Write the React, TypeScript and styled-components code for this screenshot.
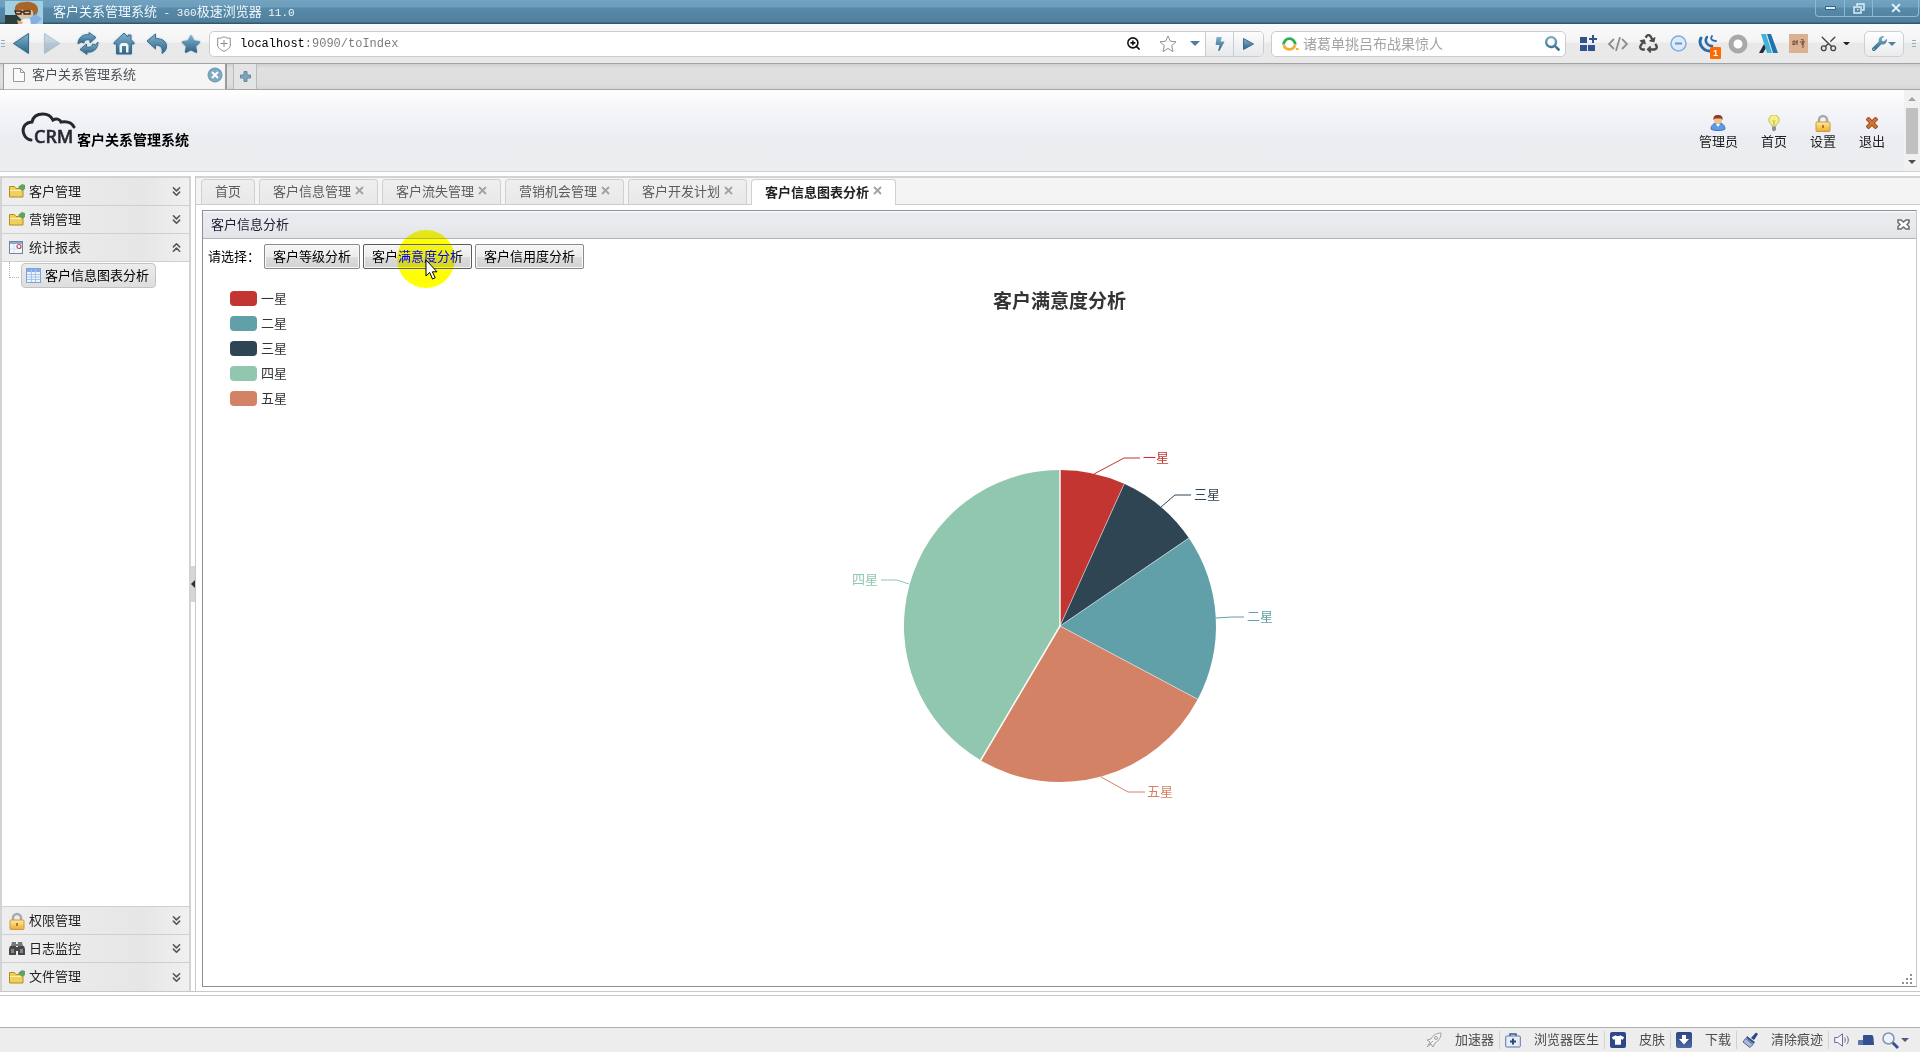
import React, { useState } from 'react';
import styled, { createGlobalStyle, css } from 'styled-components';
import { Scissors, ZoomIn, ChevronsDown, ChevronsUp } from 'lucide-react';
import {
  FaBolt,
  FaRecycle,
  FaSearch,
  FaStar,
  FaTshirt,
  FaWrench,
} from 'react-icons/fa';

const Global = createGlobalStyle`
  *, *::before, *::after { box-sizing: border-box; }
  body {
    margin: 0;
    background: #fff;
    color: #222;
    font: 13px/18px "Liberation Sans", "Noto Sans CJK SC", sans-serif;
  }
  button, input { font: inherit; color: inherit; margin: 0; }
  button { cursor: default; }
  svg { display: block; flex: none; }
  ul { list-style: none; margin: 0; padding: 0; }
`;

/* ---------- browser frame ---------- */

const Window = styled.div`
  display: flex;
  flex-direction: column;
  min-height: 100vh;
`;

const TitleBar = styled.header`
  display: flex;
  justify-content: space-between;
  height: 24px;
  padding: 0 1px 0 5px;
  background: linear-gradient(#72a3c0 0, #6b9dbc 7px, #588ba8 8px, #507f9c 22px, #2f5870 23px);
`;

const TitleText = styled.div`
  display: flex;
  align-items: center;
  gap: 10px;
  color: #eef7fc;
  white-space: pre;
`;

const Latin = styled.span`
  font: 11px/18px "Liberation Mono", monospace;
`;

const WindowButtons = styled.div`
  display: flex;
  height: 17px;
  border: 1px solid #8db9d2;
  border-top: 0;
  border-radius: 0 0 4px 4px;
`;

const WindowButton = styled.button<{ $wide?: boolean }>`
  display: grid;
  place-items: center;
  width: ${(p) => (p.$wide ? 46 : 28)}px;
  padding: 0;
  border: 0;
  border-left: 1px solid #8db9d2;
  background: none;
  &:first-child { border-left: 0; }
`;

const NavBar = styled.nav`
  display: flex;
  align-items: center;
  height: 40px;
  padding: 0 4px 0 1px;
  border-bottom: 1px solid #a2a2a2;
  background: linear-gradient(#fafafa 0, #f4f4f4 18px, #e9e9e9 19px, #e9e9e9 100%);
`;

const NavGroup = styled.div`
  display: flex;
  align-items: center;
`;

const NavButton = styled.button<{ $width: number; $dim?: boolean }>`
  display: grid;
  place-items: center;
  width: ${(p) => p.$width}px;
  height: 30px;
  padding: 0;
  border: 0;
  background: none;
  opacity: ${(p) => (p.$dim ? 0.35 : 1)};
  filter: drop-shadow(0 0 1px #b9d4e4);
`;

const blueFill = css`
  fill: url(#shade);
  stroke: #3c6c8a;
`;

const Shaded = styled.span`
  display: block;
  svg { ${blueFill} }
`;

const GripColumn = styled.span`
  width: 4px;
  height: 8px;
  background: repeating-linear-gradient(#8fb0c2 0 1px, transparent 1px 3px);
`;

const AddressBox = styled.div`
  display: flex;
  align-items: center;
  flex: 1;
  height: 26px;
  margin: 0 7px 0 2px;
  padding-left: 7px;
  border: 1px solid #c9cdd1;
  border-radius: 5px;
  background: #fff;
  overflow: hidden;
`;

const AddressInput = styled.input`
  flex: 1;
  min-width: 0;
  height: 18px;
  margin: 0 0 0 9px;
  padding: 0;
  border: 0;
  outline: 0;
  font: 12px/18px "Liberation Mono", monospace;
  color: transparent;
  background: linear-gradient(90deg, #000 0 65px, #777 65px);
  background-clip: text;
  -webkit-background-clip: text;
`;

const PlainButton = styled.button<{ $width: number }>`
  display: grid;
  place-items: center;
  width: ${(p) => p.$width}px;
  height: 24px;
  padding: 0;
  border: 0;
  background: none;
`;

const EndButton = styled(PlainButton)`
  border-left: 1px solid #c9cdd1;
  background: linear-gradient(#fdfdfd, #e6e8ea);
`;

const SearchBox = styled(AddressBox)`
  flex: none;
  width: 295px;
  margin: 0 7px 0 0;
  padding: 0 4px 0 10px;
`;

const SearchInput = styled.input`
  flex: 1;
  min-width: 0;
  height: 22px;
  margin-left: 4px;
  padding: 0;
  border: 0;
  outline: 0;
  font-size: 14px;
  background: none;
  &::placeholder { color: #a3a3a3; opacity: 1; }
`;

const Extension = styled(PlainButton)`
  position: relative;
  height: 30px;
`;

const Badge = styled.span`
  position: absolute;
  right: 2px;
  bottom: 0;
  width: 11px;
  height: 12px;
  border-radius: 1px;
  background: #ff6a00;
  color: #fff;
  font: bold 9px/12px "Liberation Sans", sans-serif;
`;

const ToolsButton = styled.button`
  display: flex;
  align-items: center;
  justify-content: center;
  gap: 1px;
  width: 40px;
  height: 26px;
  margin: 0 8px 0 14px;
  padding: 0;
  border: 1px solid #cdd0d3;
  border-radius: 5px;
  background: linear-gradient(#fff, #e9ebed);
`;

const TabStrip = styled.div`
  display: flex;
  height: 26px;
  padding-left: 3px;
  border-bottom: 1px solid #a6a6a6;
  background: linear-gradient(#cfcfcf 0, #e0e0e0 4px, #dedede 20px, #d5d5d5 100%);
`;

const PageTab = styled.div`
  display: flex;
  align-items: center;
  gap: 7px;
  width: 224px;
  margin-bottom: -1px;
  padding: 0 2px 3px 9px;
  border: solid #9a9a9a;
  border-width: 0 2px 0 1px;
  border-bottom: 1px solid #b5b5b5;
  background: #f5f5f5;
  color: #4a5258;
  span { flex: 1; }
`;

const NewTab = styled.button`
  display: grid;
  place-items: center;
  width: 24px;
  margin-left: 6px;
  padding: 0;
  border: solid #b9bcbe;
  border-width: 0 1px;
  background: #e4e4e4;
`;

/* ---------- application ---------- */

const Banner = styled.header`
  display: flex;
  justify-content: space-between;
  height: 82px;
  border-bottom: 1px solid #cfd0d3;
  background: linear-gradient(#fff 0, #f7f7fa 16px, #ebedf2 48px, #ecedee 100%);
`;

const Brand = styled.h1`
  display: flex;
  align-items: flex-end;
  align-self: flex-start;
  margin: 22px 0 0 22px;
  font-size: 14px;
  line-height: 16px;
  font-weight: bold;
  color: #000;
`;

const BannerRight = styled.div`
  display: flex;
`;

const Menu = styled.ul`
  display: flex;
  gap: 23px;
  padding: 24px 19px 0 0;
`;

const MenuLink = styled.a`
  display: flex;
  flex-direction: column;
  align-items: center;
  gap: 1px;
  color: #222;
  text-decoration: none;
`;

const IconSlot = styled.span`
  display: grid;
  place-items: center;
  height: 18px;
`;

const ScrollTrack = styled.div`
  display: flex;
  flex-direction: column;
  align-items: center;
  justify-content: space-between;
  width: 16px;
  padding: 7px 0;
  background: #f1f1f1;
`;

const ScrollThumb = styled.div`
  width: 12px;
  height: 46px;
  background: #c1c1c1;
`;

const Workspace = styled.div`
  display: flex;
  flex: 1;
  margin-top: 4px;
  border-bottom: 1px solid #c8c8c8;
`;

const Sidebar = styled.aside`
  display: flex;
  flex-direction: column;
  width: 191px;
  border: 2px solid #d3d3d3;
  border-bottom: 0;
`;

const SideHeader = styled.button`
  display: flex;
  align-items: center;
  gap: 4px;
  width: 100%;
  height: 28px;
  padding: 0 5px 0 7px;
  border: 0;
  border-bottom: 1px solid #cfcfcf;
  background: linear-gradient(90deg, #eeeeee, #e6e6e6 75%, #f0f0f0);
  text-align: left;
  span { flex: 1; }
`;

const SideBottom = styled.div`
  margin-top: auto;
  border-top: 1px solid #cfcfcf;
  > :last-child { border-bottom: 0; }
`;

const Tree = styled.div`
  display: flex;
  padding-left: 7px;
`;

const TreeLine = styled.span`
  width: 10px;
  height: 16px;
  border: dotted #b5b5b5;
  border-width: 0 0 1px 1px;
`;

const TreeItem = styled.button`
  display: flex;
  align-items: center;
  gap: 4px;
  height: 25px;
  margin: 1px 0 0 2px;
  padding: 0 6px 0 4px;
  border: 1px solid #c3c3c3;
  border-radius: 4px;
  background: linear-gradient(#ececec, #dedede);
  color: #000;
`;

const Splitter = styled.button`
  display: flex;
  align-items: center;
  width: 4px;
  padding: 0;
  border: 0;
  background: #fff;
`;

const SplitHandle = styled.span`
  display: grid;
  place-items: center;
  width: 4px;
  height: 36px;
  background: #d6d6d6;
`;

const Content = styled.main`
  display: flex;
  flex-direction: column;
  flex: 1;
  min-width: 0;
  border-left: 1px solid #c8c8c8;
  border-top: 2px solid #d3d3d3;
`;

const TabBar = styled.div`
  display: flex;
  gap: 4px;
  height: 27px;
  padding: 1px 5px 0;
  border-bottom: 1px solid #cccccc;
  background: #f4f4f4;
`;

const Tab = styled.div<{ $active: boolean }>`
  display: flex;
  align-items: center;
  gap: 4px;
  padding: 0 13px;
  border: 1px solid #d0d0d0;
  border-bottom: 0;
  border-radius: 4px 4px 0 0;
  margin-bottom: ${(p) => (p.$active ? -1 : 0)}px;
  background: ${(p) => (p.$active ? '#fff' : 'linear-gradient(#efefef, #e8e8e8)')};
  color: ${(p) => (p.$active ? '#222' : '#5c5c5c')};
  font-weight: ${(p) => (p.$active ? 'bold' : 'normal')};
`;

const TabLabel = styled.button`
  padding: 0;
  border: 0;
  background: none;
  font-weight: inherit;
`;

const TabClose = styled.button`
  padding: 0 0 4px;
  border: 0;
  background: none;
`;

const Panel = styled.section`
  display: flex;
  flex-direction: column;
  flex: 1;
  margin: 5px 3px 4px 6px;
  border: 1px solid #8e9096;
  border-right-color: #c9cacd;
`;

const PanelHeader = styled.div`
  display: flex;
  align-items: center;
  justify-content: space-between;
  height: 28px;
  padding: 0 6px 0 8px;
  border-bottom: 1px solid #b4b5b8;
  background: linear-gradient(#fff 0, #e9ebf0 2px, #e8eaee 14px, #e3e4e6 100%);
`;

const PanelTitle = styled.h2`
  margin: 0;
  font-size: 13px;
  line-height: 18px;
  font-weight: normal;
  color: #22203a;
`;

const CloseButton = styled.button`
  padding: 0;
  border: 0;
  background: none;
`;

const Toolbar = styled.div`
  display: flex;
  align-items: center;
  gap: 3px;
  padding: 5px 5px 0;
  color: #000;
`;

const ToolbarLabel = styled.span`
  width: 53px;
  white-space: nowrap;
`;

const ActionButton = styled.button<{ $hot: boolean }>`
  position: relative;
  height: 25px;
  padding: 0 8px;
  border: 1px solid ${(p) => (p.$hot ? '#5c5c5c' : '#8a8a8a')};
  border-radius: 2px;
  background: linear-gradient(#f6f6f6, #ececec 50%, #dddddd 51%, #d2d2d2);
  box-shadow: inset 0 0 0 1px #f8f8f8;
  color: #000;
`;

const PointerHalo = styled.span`
  position: absolute;
  left: 33px;
  top: -15px;
  z-index: 1;
  width: 58px;
  height: 58px;
  border-radius: 50%;
  background: #00f;
  mix-blend-mode: difference;
  pointer-events: none;
`;

const Pointer = styled.svg`
  position: absolute;
  left: 61px;
  top: 14px;
  z-index: 2;
  pointer-events: none;
`;

const Chart = styled.div`
  display: grid;
  flex: 1;
  > * { grid-area: 1 / 1; }
`;

const ChartTitle = styled.h3`
  align-self: start;
  justify-self: center;
  margin: 19px 0 0;
  font-size: 19px;
  line-height: 28px;
  font-weight: bold;
  color: #333;
`;

const Legend = styled.ul`
  align-self: start;
  justify-self: start;
  padding: 17px 0 0 27px;
`;

const LegendItem = styled.li`
  display: flex;
  align-items: center;
  gap: 4px;
  height: 25px;
  color: #333;
`;

const Swatch = styled.span<{ $color: string }>`
  width: 27px;
  height: 15px;
  border-radius: 4px;
  background: ${(p) => p.$color};
`;

const Pie = styled.svg`
  place-self: center;
  margin-bottom: 4px;
  font-size: 13px;
`;

const Footer = styled.footer`
  height: 32px;
  margin-top: 3px;
  border-top: 1px solid #c8c8c8;
`;

const StatusBar = styled.div`
  display: flex;
  align-items: center;
  justify-content: flex-end;
  height: 25px;
  padding-right: 11px;
  border-top: 1px solid #aeaeae;
  background: #ededed;
  color: #4c4c4c;
`;

const StatusItem = styled.button`
  display: flex;
  align-items: center;
  gap: 13px;
  height: 18px;
  padding: 0 5px;
  border: 0;
  border-right: 1px solid #d2d2d2;
  background: none;
`;

const StatusIcon = styled.button`
  width: 24px;
  height: 20px;
  padding: 0 3px 0 5px;
  border: 0;
  background: none;
`;

const ResizeDots = styled.svg`
  place-self: end;
  margin: 0 3px 1px 0;
`;

const ShirtBox = styled.span`
  display: grid;
  place-items: center;
  width: 16px;
  height: 16px;
  border-radius: 2px;
  background: #2f4887;
  color: #fff;
`;

/* ---------- drawings ---------- */

const Defs = () => (
  <svg width="0" height="0" style={{ position: 'absolute' }} aria-hidden="true">
    <defs>
      <linearGradient id="shade" x1="0" y1="0" x2="0" y2="1">
        <stop offset="0" stopColor="#7fb3cf" />
        <stop offset="1" stopColor="#2f6385" />
      </linearGradient>
      <linearGradient id="gold" x1="0" y1="0" x2="0" y2="1">
        <stop offset="0" stopColor="#ffe9a0" />
        <stop offset="1" stopColor="#e9ae35" />
      </linearGradient>
      <linearGradient id="navy" x1="0" y1="0" x2="0" y2="1">
        <stop offset="0" stopColor="#2c4585" />
        <stop offset="1" stopColor="#4c68a4" />
      </linearGradient>
    </defs>
  </svg>
);

const Avatar = () => (
  <svg width="38" height="23" viewBox="0 0 38 23">
    <rect width="38" height="23" fill="#9fd0e2" />
    <path d="M0 14h12l8 9H0z" fill="#2b3f3c" />
    <path d="M10 8h17c2 5-2 9-8 9s-9-4-9-9z" fill="#edbd90" />
    <path d="M10 10C9 4 13 1 20 1c8-1 13 3 13 8 0 3-2 6-5 6 1-2 0-4-1-6-4 1-11-1-14 0z" fill="#a9642a" />
    <path d="M10 10h6v3h-5zM19 10h6v3h-6zM16 11h3" fill="none" stroke="#2f2a26" strokeWidth="1.300" />
    <path d="M15 20c4-3 8-3 10-2l4 5H16z" fill="#f2f4f6" />
    <path d="M25 17l6-4 6 5-6 5h-5z" fill="#86aee0" />
    <path d="M12 19l6 2-1 2h-4z" fill="#e9a878" />
  </svg>
);

const Arrow = ({ flip }: { flip?: boolean }) => (
  <svg width="18" height="23" viewBox="0 0 18 23">
    <path d={flip ? 'M1.500 1.500v20L16.500 11.500z' : 'M16.500 1.500v20L1.500 11.500z'} fill="url(#shade)" stroke="#3c6c8a" strokeLinejoin="round" />
  </svg>
);

const Refresh = () => (
  <svg width="22" height="23" viewBox="0 0 22 23" fill="url(#shade)" stroke="#3c6c8a" strokeLinejoin="round">
    <path d="M1 12C1 5 7 1.500 12 3V.5l7 5-6 5.500V8C9 7 7 9 7 11l-3-1z" />
    <path d="M21 10c0 7-5 11-11 10v2.500l-7-5L9.500 12v3c4 1 6-1 6-3l3 1z" />
  </svg>
);

const House = () => (
  <svg width="22" height="23" viewBox="0 0 22 23" stroke="#3c6c8a" strokeLinejoin="round">
    <path d="M11 1L1 10.500V12h2.500v10h15V12H21v-1.500l-3-3V3h-3v2z" fill="url(#shade)" />
    <path d="M6.500 20.500v-7.500l2-2h5l2 2v7.500h-2.500V14H9v6.500z" fill="#eef5f9" stroke="none" />
  </svg>
);

const UndoArrow = () => (
  <svg width="22" height="22" viewBox="0 0 22 22">
    <path d="M1 8L9.500 1v4.500C17 5.500 21 9 20.500 14c-.3 3-2 5-4.500 6.500 1-5-1-8.500-6.500-8.500v4z" fill="url(#shade)" stroke="#3c6c8a" strokeLinejoin="round" />
  </svg>
);

const Caret = ({ color, size = 8, up }: { color: string; size?: number; up?: boolean }) => (
  <svg width={size} height={size / 2} viewBox="0 0 8 4">
    <path d={up ? 'M0 4h8L4 0z' : 'M0 0h8L4 4z'} fill={color} />
  </svg>
);

const Cross = ({ color, size = 9 }: { color: string; size?: number }) => (
  <svg width={size} height={size} viewBox="0 0 9 9">
    <path d="M1 1l7 7M8 1L1 8" stroke={color} strokeWidth="1.800" />
  </svg>
);

const Folder = () => (
  <svg width="16" height="15" viewBox="0 0 16 15">
    <path d="M.5 2.500h5l1.500 2h7v8.500H.5z" fill="#f1cf5b" stroke="#b08c28" />
    <path d="M1 6h12v1H1z" fill="#fff0ae" />
    <path d="M9 3l4-3 3 1v4l-3 2z" fill="#5fa364" />
  </svg>
);

const Lock = () => (
  <svg width="16" height="18" viewBox="0 0 16 18">
    <path d="M4 9V6a4 4 0 0 1 8 0v3" fill="none" stroke="#a7a9ad" strokeWidth="2.500" />
    <rect x="1" y="8" width="14" height="9.500" rx="1" fill="url(#gold)" stroke="#cf9a35" />
    <path d="M7 11h2v3H7z" fill="#b87a1d" />
  </svg>
);

const Binoculars = () => (
  <svg width="16" height="15" viewBox="0 0 16 15">
    <path d="M3 1h4v2h2V1h4l1 4H2z" fill="#77777c" />
    <path d="M1 5h6v9H0V8zM9 5h6l1 3v6H9zM7 6h2v4H7z" fill="#47474c" />
    <path d="M2 8h3v4H2zM11 8h3v4h-3z" fill="#85858b" />
  </svg>
);

const Report = () => (
  <svg width="16" height="15" viewBox="0 0 16 15">
    <rect x=".5" y="1.500" width="13" height="12" fill="#f3f7fc" stroke="#6d87a8" />
    <path d="M1 2h12v2H1z" fill="#8fa9ca" />
    <path d="M1 9h8M5 4v9" stroke="#d5deea" />
    <circle cx="10" cy="6.500" r="2" fill="#fff" stroke="#b0504d" strokeWidth="1.200" />
  </svg>
);

const Sheet = () => (
  <svg width="15" height="15" viewBox="0 0 15 15">
    <rect x=".5" y=".5" width="14" height="14" fill="#eef4fd" stroke="#7fa3d4" />
    <path d="M1 1h13v3H1z" fill="#86aee6" />
    <path d="M5.500 1v13M9.500 1v13M1 6.500h13M1 9h13M1 11.500h13" stroke="#a9c4ea" />
  </svg>
);

const Logo = () => (
  <svg width="55" height="36" viewBox="0 0 55 36" overflow="visible">
    <path d="M9 28C2 27-1 18 3 13c2-2 4-3 7-3 1-5 5-8 11-8 5 0 8 2 10 6 3-2 7-1 8 2 6-1 11 1 13 5" fill="none" stroke="#24282f" strokeWidth="3" strokeLinecap="round" />
    <text x="12" y="31" fontFamily="'Noto Sans', sans-serif" fontSize="18" fontWeight="500" fill="#24282f" stroke="#24282f" strokeWidth=".5">CRM</text>
  </svg>
);

const UserIcon = () => (
  <svg width="16" height="16" viewBox="0 0 16 16">
    <path d="M1 14c0-4 3-6 7-6s7 2 7 6c-2 2-12 2-14 0z" fill="#5b9be6" stroke="#3c72bb" />
    <path d="M6 9h4l-2 3z" fill="#fff" />
    <circle cx="8" cy="5" r="4" fill="#f0c08e" />
    <path d="M3.500 5C3 1 5 0 8 0s5 1 4.500 5L11 3.500H5z" fill="#8a3f22" />
  </svg>
);

const BulbIcon = () => (
  <svg width="12" height="17" viewBox="0 0 12 17">
    <path d="M4 11C4 9 .8 8 .8 5a5.200 5.200 0 0 1 10.400 0C11.200 8 8 9 8 11z" fill="#f4f286" stroke="#bdbd63" />
    <path d="M5 5l1 5 1-5" fill="none" stroke="#cfc84b" />
    <path d="M4 11.500h4V15l-2 1.500L4 15z" fill="#8d9299" />
  </svg>
);

const ExitIcon = () => (
  <svg width="12" height="12" viewBox="0 0 14 14">
    <path d="M3 3l8 8M11 3l-8 8" stroke="#9a4a1c" strokeWidth="5" strokeLinecap="square" />
    <path d="M3 3l8 8M11 3l-8 8" stroke="#cf7435" strokeWidth="3" strokeLinecap="square" />
  </svg>
);

const GridPlus = () => (
  <svg width="17" height="17" viewBox="0 0 17 17" fill="#33508f">
    <path d="M0 2h7v6H0zM0 10h7v6H0zM8 10h7v6H8zM12 0h2v8h-2zM9 3h8v2H9z" />
  </svg>
);

const CodeIcon = () => (
  <svg width="20" height="14" viewBox="0 0 20 14" fill="none" stroke="#8d8d8d" strokeWidth="1.800">
    <path d="M6 2L1 7l5 5M14 2l5 5-5 5M12 0L8 14" />
  </svg>
);

const MinusCircle = () => (
  <svg width="17" height="17" viewBox="0 0 17 17">
    <circle cx="8.500" cy="8.500" r="7.500" fill="#dfeaf8" stroke="#7eaee2" strokeWidth="1.500" />
    <path d="M5 8.500h7" stroke="#5e97d8" strokeWidth="2" />
  </svg>
);

const Swirl = () => (
  <svg width="20" height="18" viewBox="0 0 20 18" fill="none" stroke="#2a6cab" strokeLinecap="round">
    <path d="M3 3c-3 6 2 13 9 13" strokeWidth="3" />
    <path d="M9 2c-3 4 0 9 5 9" strokeWidth="2.500" />
    <path d="M14 1c-2 3 0 5 4 5" strokeWidth="1.800" />
  </svg>
);

const Ring = () => (
  <svg width="20" height="20" viewBox="0 0 20 20">
    <circle cx="10" cy="10" r="7" fill="#fff" stroke="#a9a9a9" strokeWidth="5" />
  </svg>
);

const Slashes = () => (
  <svg width="19" height="20" viewBox="0 0 19 20">
    <path d="M0 19l5-9 2 4-3 5z" fill="#1e2e3c" />
    <path d="M2 0h5l6 19H8z" fill="#43b1d8" />
    <path d="M8 0h4l7 19h-5z" fill="#1f72ad" />
  </svg>
);

const Portrait = () => (
  <svg width="19" height="19" viewBox="0 0 19 19">
    <rect width="19" height="19" fill="#dcb091" />
    <path d="M4 7v4M4 7h2v3.500H4M8 6v5M7 8h2M12 5l1 1M11 8h5M14 5v9M12 10h3" stroke="#5b4335" fill="none" strokeWidth=".9" />
  </svg>
);

const Shield = () => (
  <svg width="14" height="16" viewBox="0 0 14 16" fill="none" stroke="#8b8b8b">
    <path d="M7 .7c2 1.300 4 1.500 6.300 1.500V9c0 3-3 5-6.300 6.300C3.700 14 .7 12 .7 9V2.200C3 2.200 5 2 7 .7zM3.500 7.500h7M7 4v7" />
  </svg>
);

const OutlineStar = () => (
  <svg width="18" height="18" viewBox="0 0 18 18" fill="none" stroke="#8f8f8f" strokeLinejoin="round">
    <path d="M9 1l2.300 5.200 5.700.6-4.300 3.800 1.300 5.900L9 13.500l-5 3 1.300-5.900L1 6.800l5.700-.6z" />
  </svg>
);

const SearchLogo = () => (
  <svg width="17" height="15" viewBox="0 0 17 15" fill="none" strokeWidth="2.800">
    <path d="M1.600 8.500a5.800 5.800 0 1 1 11.600 0" stroke="#2fae56" />
    <path d="M1.800 9a5.800 5.800 0 0 0 11.200 0" stroke="#f3b02a" />
    <path d="M14 13h2.500" stroke="#f3b02a" strokeWidth="2" />
  </svg>
);

const PageIcon = () => (
  <svg width="12" height="14" viewBox="0 0 12 14" fill="#fafafa" stroke="#9a9a9a">
    <path d="M.5.5h7l4 4v9H.5zM7.500.5v4h4" />
  </svg>
);

const RoundClose = () => (
  <svg width="16" height="16" viewBox="0 0 16 16">
    <circle cx="8" cy="8" r="7" fill="#7da9c2" stroke="#6a96b0" />
    <path d="M5 5l6 6M11 5l-6 6" stroke="#fff" strokeWidth="2" />
  </svg>
);

const PlusIcon = () => (
  <svg width="11" height="11" viewBox="0 0 11 11">
    <path d="M4 .5h3V4h3.500v3H7v3.500H4V7H.5V4H4z" fill="#7ba6bd" stroke="#62899e" />
  </svg>
);

const PanelClose = () => (
  <svg width="13" height="11" viewBox="0 0 13 11">
    <path d="M1 1h3l2.500 2L9 1h3v2.500l-2 2 2 2V10H9L6.500 8 4 10H1V7.500l2-2-2-2z" fill="#fff" stroke="#6b6b6b" strokeWidth="1.500" />
  </svg>
);

const Rocket = () => (
  <svg width="16" height="16" viewBox="0 0 16 16" fill="#f4f4f4" stroke="#a0a0a0">
    <path d="M5 7c2-4 6-6 10-6 0 4-2 8-6 10l-2 4-2-3-3 2 2-4-3-2z" />
    <circle cx="10" cy="6" r="1.500" />
    <path d="M1 15l6-6" />
  </svg>
);

const Medkit = () => (
  <svg width="16" height="15" viewBox="0 0 16 15">
    <path d="M5 3V1h6v2" fill="none" stroke="#3d588f" strokeWidth="1.500" />
    <rect x=".7" y="3" width="14.600" height="11" rx="1" fill="#e6edf8" stroke="#5d77a9" />
    <path d="M7 5.500h2v2h2v2H9v2H7v-2H5v-2h2z" fill="#2c4585" />
  </svg>
);

const DownBox = () => (
  <svg width="16" height="16" viewBox="0 0 16 16">
    <rect width="16" height="16" rx="2" fill="url(#navy)" />
    <path d="M6 3h4v4h3l-5 5.500L3 7h3z" fill="#fff" />
  </svg>
);

const Brush = () => (
  <svg width="16" height="16" viewBox="0 0 16 16">
    <path d="M9 6l5-5.500 2 1.500-4 6z" fill="#2c4585" />
    <path d="M5 4l8 6-1.500 2L4 6z" fill="#3b5591" />
    <path d="M3.500 6.500l7.500 6L8 15.500 1 10z" fill="#a9bbd8" stroke="#4d659b" />
  </svg>
);

const Speaker = () => (
  <svg width="17" height="14" viewBox="0 0 17 14" fill="#f3f5fa" stroke="#686c8a">
    <path d="M.7 4.500h3L8.500.8v12.400l-4.800-3.700h-3z" />
    <path d="M10.500 4.500c1 1.500 1 3.500 0 5M12.800 2.800c2 2.500 2 6 0 8.500" fill="none" />
  </svg>
);

const Dock = () => (
  <svg width="16" height="12" viewBox="0 0 16 12">
    <path d="M5 2q0-1 1-1h8q1 0 1.500 3l.5 7H5z" fill="#33508f" />
    <path d="M0 11V7q0-1 1-1h4v5z" fill="#5c77ad" />
  </svg>
);

const Lens = () => (
  <svg width="17" height="17" viewBox="0 0 17 17">
    <path d="M10 10l6 6" stroke="#33508f" strokeWidth="2.800" />
    <circle cx="6.500" cy="6.500" r="5.500" fill="#eef3fb" stroke="#8590b5" strokeWidth="1.500" />
  </svg>
);

/* ---------- data ---------- */

const levels = [
  { name: '一星', color: '#c23531' },
  { name: '二星', color: '#61a0a8' },
  { name: '三星', color: '#2f4554' },
  { name: '四星', color: '#91c7ae' },
  { name: '五星', color: '#d48265' },
];

const slices = [
  { name: '一星', color: '#c23531', to: 24.3, line: '224,38 254,22 270,22', tx: 273, ty: 22 },
  { name: '三星', color: '#2f4554', to: 55.7, line: '291,71 305,59 321,59', tx: 324, ty: 59 },
  { name: '二星', color: '#61a0a8', to: 118, line: '346,182 362,181 374,181', tx: 377, ty: 181 },
  { name: '五星', color: '#d48265', to: 210.6, line: '231,341 258,356 275,356', tx: 277, ty: 356 },
  { name: '四星', color: '#91c7ae', to: 360, line: '39,148 27,144 11,144', tx: 8, ty: 144, end: true },
];

const R = 156;
const CX = 190;
const CY = 190;
const rim = (deg: number) => {
  const a = (deg * Math.PI) / 180;
  return `${(CX + R * Math.sin(a)).toFixed(2)} ${(CY - R * Math.cos(a)).toFixed(2)}`;
};

const SatisfactionPie = () => (
  <Pie width="380" height="380" viewBox="0 0 380 380" overflow="visible" role="img" aria-label="客户满意度分析">
    {slices.map((s, i) => {
      const from = i ? slices[i - 1].to : 0;
      return (
        <g key={s.name}>
          <path d={`M${CX} ${CY}L${rim(from)}A${R} ${R} 0 0 1 ${rim(s.to)}Z`} fill={s.color} />
          <polyline points={s.line} fill="none" stroke={s.color} />
          <text x={s.tx} y={s.ty + 4} fill={s.color} textAnchor={s.end ? 'end' : 'start'}>
            {s.name}
          </text>
        </g>
      );
    })}
    {slices.map((s) => (
      <path key={s.name} d={`M${CX} ${CY}L${rim(s.to)}`} stroke="#fff" strokeOpacity={s.to > 200 ? 0.95 : 0.5} strokeWidth={s.to > 200 ? 1.5 : 1} />
    ))}
  </Pie>
);

const topMenus = [
  { name: '客户管理', icon: <Folder />, open: false },
  { name: '营销管理', icon: <Folder />, open: false },
  { name: '统计报表', icon: <Report />, open: true },
];

const bottomMenus = [
  { name: '权限管理', icon: <Lock /> },
  { name: '日志监控', icon: <Binoculars /> },
  { name: '文件管理', icon: <Folder /> },
];

const tabs = ['首页', '客户信息管理', '客户流失管理', '营销机会管理', '客户开发计划', '客户信息图表分析'];

const actions = ['客户等级分析', '客户满意度分析', '客户信用度分析'];

const account = [
  { name: '管理员', icon: <UserIcon /> },
  { name: '首页', icon: <BulbIcon /> },
  { name: '设置', icon: <Lock /> },
  { name: '退出', icon: <ExitIcon /> },
];

const extensions = [
  { name: '应用', icon: <GridPlus /> },
  { name: '开发者工具', icon: <CodeIcon /> },
  { name: '回收', icon: <FaRecycle size={19} color="#4c4c4c" /> },
  { name: '缩小', icon: <MinusCircle /> },
  { name: '订阅', icon: <Swirl />, badge: '1' },
  { name: '圆环', icon: <Ring /> },
  { name: '翻译', icon: <Slashes /> },
  { name: '头像', icon: <Portrait /> },
  { name: '截图', icon: <Scissors size={19} color="#444" strokeWidth={1.7} transform="rotate(-90)" /> },
];

const statusItems = [
  { name: '加速器', icon: <Rocket /> },
  { name: '浏览器医生', icon: <Medkit /> },
  { name: '皮肤', icon: <ShirtBox><FaTshirt size={12} /></ShirtBox> },
  { name: '下载', icon: <DownBox /> },
  { name: '清除痕迹', icon: <Brush /> },
];

/* ---------- sections ---------- */

const BrowserChrome = () => (
  <>
    <TitleBar>
      <TitleText>
        <Avatar />
        <span>
          客户关系管理系统<Latin> - 360</Latin>极速浏览器<Latin> 11.0</Latin>
        </span>
      </TitleText>
      <WindowButtons>
        <WindowButton aria-label="最小化">
          <svg width="11" height="4" viewBox="0 0 11 4"><path d="M.5.5h10v3H.5z" fill="#d9eefa" stroke="#35647f" /></svg>
        </WindowButton>
        <WindowButton aria-label="还原">
          <svg width="12" height="11" viewBox="0 0 12 11" fill="none" stroke="#d9eefa" strokeWidth="1.500"><path d="M4 3V1h7v6H9M1 4h7v6H1zM4 6.500h1.500" /></svg>
        </WindowButton>
        <WindowButton $wide aria-label="关闭"><Cross color="#e3f3fb" size={10} /></WindowButton>
      </WindowButtons>
    </TitleBar>

    <NavBar>
      <NavGroup>
        <GripColumn />
        <NavButton $width={32} aria-label="后退"><Arrow /></NavButton>
        <NavButton $width={30} $dim aria-label="前进"><Arrow flip /></NavButton>
        <NavButton $width={42} aria-label="刷新"><Refresh /></NavButton>
        <NavButton $width={30} aria-label="主页"><House /></NavButton>
        <NavButton $width={36} aria-label="恢复"><UndoArrow /></NavButton>
        <NavButton $width={32} aria-label="收藏"><Shaded><FaStar size={20} /></Shaded></NavButton>
      </NavGroup>
      <AddressBox>
        <Shield />
        <AddressInput aria-label="地址" defaultValue="localhost:9090/toIndex" />
        <PlainButton $width={36} aria-label="放大"><ZoomIn size={15} color="#111" strokeWidth={2.5} /></PlainButton>
        <PlainButton $width={34} aria-label="加入收藏"><OutlineStar /></PlainButton>
        <PlainButton $width={20} aria-label="收藏列表"><Caret color="#4f7f9c" size={10} /></PlainButton>
        <EndButton $width={28} aria-label="极速模式"><Shaded><FaBolt size={14} /></Shaded></EndButton>
        <EndButton $width={30} aria-label="转到">
          <svg width="11" height="12" viewBox="0 0 11 12"><path d="M.5.5v11l10-5.500z" fill="url(#shade)" stroke="#3c6c8a" /></svg>
        </EndButton>
      </AddressBox>
      <SearchBox>
        <SearchLogo />
        <SearchInput aria-label="搜索" placeholder="诸葛单挑吕布战果惊人" />
        <PlainButton $width={18} aria-label="搜索"><Shaded><FaSearch size={15} /></Shaded></PlainButton>
      </SearchBox>
      <NavGroup>
        {extensions.map((e) => (
          <Extension key={e.name} $width={30} aria-label={e.name}>
            {e.icon}
            {e.badge && <Badge>{e.badge}</Badge>}
          </Extension>
        ))}
        <Caret color="#222" size={7} />
        <ToolsButton aria-label="工具">
          <Shaded><FaWrench size={15} /></Shaded>
          <Caret color="#4f7f9c" />
        </ToolsButton>
        <GripColumn />
      </NavGroup>
    </NavBar>

    <TabStrip>
      <PageTab>
        <PageIcon />
        <span>客户关系管理系统</span>
        <CloseButton aria-label="关闭标签"><RoundClose /></CloseButton>
      </PageTab>
      <NewTab aria-label="新标签"><PlusIcon /></NewTab>
    </TabStrip>
  </>
);

const Fold = ({ open }: { open?: boolean }) => {
  const Icon = open ? ChevronsUp : ChevronsDown;
  return <Icon size={15} color="#555" strokeWidth={2.5} />;
};

export default function App() {
  const [active, setActive] = useState(5);

  return (
    <Window>
      <Global />
      <Defs />
      <BrowserChrome />

      <Banner>
        <Brand>
          <Logo />
          客户关系管理系统
        </Brand>
        <BannerRight>
          <Menu>
            {account.map((a) => (
              <li key={a.name}>
                <MenuLink href="#">
                  <IconSlot>{a.icon}</IconSlot>
                  {a.name}
                </MenuLink>
              </li>
            ))}
          </Menu>
          <ScrollTrack>
            <Caret color="#a3a3a3" up />
            <ScrollThumb />
            <Caret color="#505050" />
          </ScrollTrack>
        </BannerRight>
      </Banner>

      <Workspace>
        <Sidebar>
          {topMenus.map((m) => (
            <SideHeader key={m.name}>
              {m.icon}
              <span>{m.name}</span>
              <Fold open={m.open} />
            </SideHeader>
          ))}
          <Tree>
            <TreeLine />
            <TreeItem>
              <Sheet />
              客户信息图表分析
            </TreeItem>
          </Tree>
          <SideBottom>
            {bottomMenus.map((m) => (
              <SideHeader key={m.name}>
                {m.icon}
                <span>{m.name}</span>
                <Fold />
              </SideHeader>
            ))}
          </SideBottom>
        </Sidebar>

        <Splitter aria-label="收起侧栏">
          <SplitHandle>
            <svg width="4" height="8" viewBox="0 0 4 8"><path d="M4 0v8L0 4z" fill="#333" /></svg>
          </SplitHandle>
        </Splitter>

        <Content>
          <TabBar>
            {tabs.map((t, i) => (
              <Tab key={t} $active={i === active}>
                <TabLabel onClick={() => setActive(i)}>{t}</TabLabel>
                {i > 0 && <TabClose aria-label={`关闭${t}`}><Cross color="#a2a2a2" /></TabClose>}
              </Tab>
            ))}
          </TabBar>

          <Panel>
            <PanelHeader>
              <PanelTitle>客户信息分析</PanelTitle>
              <CloseButton aria-label="关闭"><PanelClose /></CloseButton>
            </PanelHeader>
            <Toolbar>
              <ToolbarLabel>请选择：</ToolbarLabel>
              {actions.map((a, i) => (
                <ActionButton key={a} $hot={i === 1}>
                  {a}
                  {i === 1 && (
                    <>
                      <PointerHalo />
                      <Pointer width="13" height="21" viewBox="0 0 13 21">
                        <path d="M1 1v16l3.700-3.500L7.500 20l2.700-1.200-2.800-6H12z" fill="#fff" stroke="#000" />
                      </Pointer>
                    </>
                  )}
                </ActionButton>
              ))}
            </Toolbar>
            <Chart>
              <Legend>
                {levels.map((l) => (
                  <LegendItem key={l.name}>
                    <Swatch $color={l.color} />
                    {l.name}
                  </LegendItem>
                ))}
              </Legend>
              <ChartTitle>客户满意度分析</ChartTitle>
              <SatisfactionPie />
              <ResizeDots width="12" height="12" viewBox="0 0 12 12" fill="#8f8f8f">
                <path d="M9 1h2v2H9zM9 5h2v2H9zM9 9h2v2H9zM5 5h2v2H5zM5 9h2v2H5zM1 9h2v2H1z" />
              </ResizeDots>
            </Chart>
          </Panel>
        </Content>
      </Workspace>

      <Footer />
      <StatusBar>
        {statusItems.map((s) => (
          <StatusItem key={s.name}>
            {s.icon}
            {s.name}
          </StatusItem>
        ))}
        <StatusIcon aria-label="声音"><Speaker /></StatusIcon>
        <StatusIcon aria-label="停靠"><Dock /></StatusIcon>
        <StatusIcon aria-label="缩放"><Lens /></StatusIcon>
        <Caret color="#4c5a80" size={8} />
      </StatusBar>
    </Window>
  );
}
